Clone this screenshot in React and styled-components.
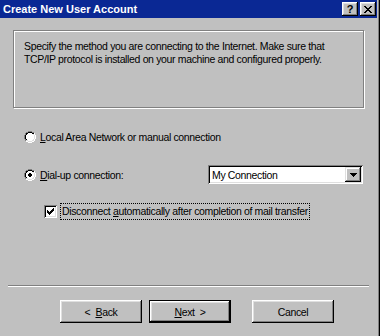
import React from "react";
import styled, { createGlobalStyle } from "styled-components";

const Global = createGlobalStyle`
  html, body { margin: 0; padding: 0; background: #c0c0c0; }
  body { font-family: "Liberation Sans", Arial, sans-serif; font-size: 10.5px; letter-spacing: -0.35px; color: #000; }
  * { box-sizing: border-box; }
`;

const Window = styled.div`
  width: 380px;
  height: 336px;
  background: #c0c0c0;
  padding-right: 3px;
  box-shadow: inset -1px 0 #000, inset -2px 0 #808080;
  display: flex;
  flex-direction: column;
  overflow: hidden;
`;

const TitleBar = styled.div`
  height: 18px;
  background: #0a2894;
  display: flex;
  align-items: center;
  justify-content: space-between;
  padding: 0 1px 0 3px;
`;

const Title = styled.span`
  color: #fff;
  font-weight: bold;
  font-size: 11px;
  letter-spacing: 0;
`;

const CaptionButtons = styled.div`
  display: flex;
  gap: 2px;
`;

const CaptionButton = styled.div`
  width: 16px;
  height: 14px;
  background: #c0c0c0;
  box-shadow: inset -1px -1px #000, inset 1px 1px #fff, inset -2px -2px #808080, inset 2px 2px #dfdfdf;
  display: flex;
  align-items: center;
  justify-content: center;
  font-weight: bold;
  font-size: 11px;
  letter-spacing: 0;
  line-height: 1;
`;

const Body = styled.div`
  display: flex;
  flex-direction: column;
  padding-left: 13px;
`;

const GroupBox = styled.div`
  margin-top: 12px;
  width: 351px;
  height: 78px;
  border: 1px solid #808080;
  box-shadow: inset 1px 1px #fff, 1px 1px #fff;
  padding: 9px 10px 0 10px;
  line-height: 13px;
`;

const Row = styled.div`
  display: flex;
  align-items: center;
  height: ${(p) => p.$h || 16}px;
  margin-top: ${(p) => p.$mt || 0}px;
  padding-left: ${(p) => p.$pl || 0}px;
`;

const Label = styled.span`
  margin-left: ${(p) => p.$ml || 4}px;
  white-space: nowrap;
`;

const Focus = styled.span`
  margin-left: 4px;
  padding: 1px 1px;
  outline: 1px dotted #000;
  outline-offset: 0;
  white-space: nowrap;
  line-height: 13px;
`;

const Check = styled.div`
  width: 13px;
  height: 13px;
  background: #fff;
  box-shadow: inset 1px 1px #808080, inset -1px -1px #fff, inset 2px 2px #000, inset -2px -2px #dfdfdf;
  display: flex;
  align-items: center;
  justify-content: center;
`;

const Select = styled.div`
  margin-left: auto;
  margin-right: 14px;
  width: 155px;
  height: 19px;
  background: #fff;
  box-shadow: inset 1px 1px #808080, inset -1px -1px #fff, inset 2px 2px #000, inset -2px -2px #dfdfdf;
  display: flex;
  align-items: center;
  padding: 2px;
`;

const SelectText = styled.span`
  flex: 1;
  padding-left: 2px;
`;

const SelectButton = styled.div`
  width: 16px;
  height: 15px;
  background: #c0c0c0;
  box-shadow: inset -1px -1px #000, inset 1px 1px #dfdfdf, inset -2px -2px #808080, inset 2px 2px #fff;
  display: flex;
  align-items: center;
  justify-content: center;
`;

const Separator = styled.div`
  margin-top: 66px;
  margin-left: -5px;
  width: 361px;
  height: 2px;
  border-top: 1px solid #808080;
  border-bottom: 1px solid #fff;
`;

const ButtonRow = styled.div`
  display: flex;
  margin-top: 13px;
  padding-left: 47px;
`;

const Button = styled.div`
  width: 82px;
  height: 23px;
  margin-left: ${(p) => p.$ml || 0}px;
  background: #c0c0c0;
  display: flex;
  align-items: center;
  justify-content: center;
  box-shadow: ${(p) =>
    p.$default
      ? "inset 0 0 0 1px #000, inset -2px -2px #000, inset 2px 2px #fff, inset -3px -3px #808080, inset 3px 3px #dfdfdf"
      : "inset -1px -1px #000, inset 1px 1px #fff, inset -2px -2px #808080, inset 2px 2px #dfdfdf"};
  white-space: pre;
`;

const U = styled.span`
  text-decoration: underline;
  text-underline-offset: 1px;
`;

const Radio = ({ checked }) => (
  <svg width="12" height="12" viewBox="0 0 12 12" shapeRendering="crispEdges">
    <path d="M4 0h4v1H4zM2 1h2v1H2zM8 1h2v1H8zM1 2h1v2H1zM0 4h1v4H0zM1 8h1v2H1z" fill="#808080" />
    <path d="M4 1h4v1H4zM2 2h2v1H2zM8 2h2v1H8zM2 3h1v1H2zM1 4h1v4H1zM2 8h1v1H2z" fill="#000" />
    <path d="M10 2h1v2h-1zM11 4h1v4h-1zM10 8h1v2h-1zM8 10h2v1H8zM2 10h2v1H2zM4 11h4v1H4z" fill="#fff" />
    <path d="M9 3h1v1H9zM10 4h1v4h-1zM9 8h1v1H9zM8 9h2v1H8zM2 9h2v1H2zM4 10h4v1H4z" fill="#dfdfdf" />
    <path d="M4 2h4v1H4zM3 3h6v1H3zM2 4h8v4H2zM3 8h6v1H3zM4 9h4v1H4z" fill="#fff" />
    {checked && <path d="M5 4h2v1H5zM4 5h4v2H4zM5 7h2v1H5z" fill="#000" />}
  </svg>
);

export default function App() {
  return (
    <>
      <Global />
      <Window>
        <TitleBar>
          <Title>Create New User Account</Title>
          <CaptionButtons>
            <CaptionButton>?</CaptionButton>
            <CaptionButton>
              <svg width="8" height="7" viewBox="0 0 8 7" shapeRendering="crispEdges">
                <path d="M0 0h2v1h1v1h2V1h1V0h2v1H7v1H6v1H5v1h1v1h1v1h1v1H6V6H5V5H3v1H2v1H0V6h1V5h1V4h1V3H2V2H1V1H0z" fill="#000" />
              </svg>
            </CaptionButton>
          </CaptionButtons>
        </TitleBar>
        <Body>
          <GroupBox>
            Specify the method you are connecting to the Internet. Make sure that
            <br />
            TCP/IP protocol is installed on your machine and configured properly.
          </GroupBox>
          <Row $mt={21} $pl={11}>
            <Radio />
            <Label>
              <U>L</U>ocal Area Network or manual connection
            </Label>
          </Row>
          <Row $mt={20} $h={19} $pl={11}>
            <Radio checked />
            <Label>
              <U>D</U>ial-up connection:
            </Label>
            <Select>
              <SelectText>My Connection</SelectText>
              <SelectButton>
                <svg width="7" height="4" viewBox="0 0 7 4" shapeRendering="crispEdges">
                  <path d="M0 0h7v1H6v1H5v1H4v1H3V3H2V2H1V1H0z" fill="#000" />
                </svg>
              </SelectButton>
            </Select>
          </Row>
          <Row $mt={19} $pl={31}>
            <Check>
              <svg width="7" height="7" viewBox="0 0 7 7" shapeRendering="crispEdges">
                <path d="M6 0h1v3H6v1H5v1H4v1H3v1H2V6H1V5H0V2h1v1h1v1h1V3h1V2h1V1h1z" fill="#000" />
              </svg>
            </Check>
            <Focus>
              Disconnect <U>a</U>utomatically after completion of mail transfer
            </Focus>
          </Row>
          <Separator />
          <ButtonRow>
            <Button>{"<  "}<U>B</U>ack</Button>
            <Button $default $ml={7}>
              <U>N</U>ext{"  >"}
            </Button>
            <Button $ml={21}>Cancel</Button>
          </ButtonRow>
        </Body>
      </Window>
    </>
  );
}
